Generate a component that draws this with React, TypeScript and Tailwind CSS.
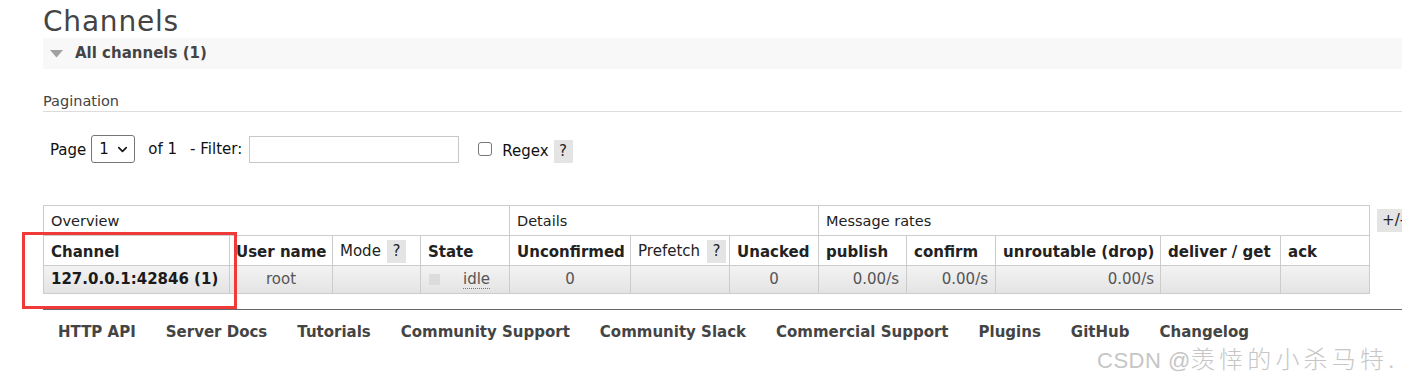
import { ChevronDown } from "lucide-react";

const colWidths = [186, 103, 88, 89, 121, 99, 89, 88, 89, 165, 120, 89];

const footerLinks = [
  "HTTP API",
  "Server Docs",
  "Tutorials",
  "Community Support",
  "Community Slack",
  "Commercial Support",
  "Plugins",
  "GitHub",
  "Changelog",
];

function HelpBadge({ className = "" }: { className?: string }) {
  return (
    <span
      className={`inline-flex h-[23px] w-[19px] items-center justify-center bg-[#e4e4e4] text-[15px] font-normal text-[#222] ${className}`}
    >
      ?
    </span>
  );
}

export default function App() {
  return (
    <div className="relative h-[381px] w-[1402px] overflow-hidden bg-white font-['DejaVu_Sans',sans-serif] text-[#222]">
      <div className="pl-[43px]">
        {/* Title */}
        <h1 className="h-[38px] pt-[5px] text-[28px] leading-[33px] tracking-[0.8px] text-[#444]">
          Channels
        </h1>

        {/* Section toggle */}
        <div className="flex h-[31px] items-center bg-[#f8f8f8] pl-[7px]">
          <svg width="13" height="8" viewBox="0 0 13 8" className="mr-[12px]">
            <polygon points="0,0 13,0 6.5,7.5" fill="#a0a0a0" />
          </svg>
          <span className="text-[15px] font-bold text-[#444]">All channels (1)</span>
        </div>

        {/* Pagination */}
        <div className="mt-[22px] border-b border-[#ddd] text-[14.5px] leading-[20px] text-[#444]">
          Pagination
        </div>

        <div className="mt-[23px] flex h-[28px] items-center text-[15px] text-[#111]">
          <span className="ml-[7px] mt-[2px]">Page</span>
          <div className="ml-[5px] flex h-[28px] w-[44px] items-center rounded-[3px] border border-[#767676] pl-[7px]">
            <span>1</span>
            <ChevronDown className="ml-[6px] h-[15px] w-[15px]" strokeWidth={2.5} />
          </div>
          <span className="ml-[13px] mt-[1px]">of 1</span>
          <span className="ml-[13px]">- Filter:</span>
          <div className="ml-[7px] h-[27px] w-[210px] border border-[#c8c8c8]" />
          <div className="ml-[19px] h-[14px] w-[14px] rounded-[3px] border border-[#767676]" />
          <span className="ml-[10px] mt-[5px]">Regex</span>
          <HelpBadge className="ml-[5px] mt-[4px]" />
        </div>

        {/* Table */}
        <div className="mt-[42px] flex items-start">
          <table className="w-[1326px] shrink-0 table-fixed border-collapse text-[15px]">
            <colgroup>
              {colWidths.map((w, i) => (
                <col key={i} style={{ width: w }} />
              ))}
            </colgroup>
            <thead>
              <tr className="h-[30px]">
                <th colSpan={4} className="border border-[#ccc] pl-[7px] pt-[3px] text-left text-[14.5px] font-normal">
                  Overview
                </th>
                <th colSpan={3} className="border border-[#ccc] pl-[7px] pt-[3px] text-left text-[14.5px] font-normal">
                  Details
                </th>
                <th colSpan={5} className="border border-[#ccc] pl-[7px] pt-[3px] text-left text-[14.5px] font-normal">
                  Message rates
                </th>
              </tr>
              <tr className="h-[30px]">
                <th className="border border-[#ccc] pl-[7px] pt-[3px] text-left font-bold">Channel</th>
                <th className="border border-[#ccc] pl-[6px] pt-[3px] text-left font-bold whitespace-nowrap">User name</th>
                <th className="border border-[#ccc] pl-[7px] pt-[1px] text-left font-normal">
                  <span className="flex items-center">
                    Mode
                    <HelpBadge className="ml-[6px]" />
                  </span>
                </th>
                <th className="border border-[#ccc] pl-[7px] pt-[3px] text-left font-bold">State</th>
                <th className="border border-[#ccc] pl-[7px] pt-[3px] text-left font-bold">Unconfirmed</th>
                <th className="border border-[#ccc] pl-[7px] pt-[1px] text-left font-normal">
                  <span className="flex items-center">
                    Prefetch
                    <HelpBadge className="ml-[7px]" />
                  </span>
                </th>
                <th className="border border-[#ccc] pl-[7px] pt-[3px] text-left font-bold">Unacked</th>
                <th className="border border-[#ccc] pl-[7px] pt-[3px] text-left font-bold">publish</th>
                <th className="border border-[#ccc] pl-[7px] pt-[3px] text-left font-bold">confirm</th>
                <th className="border border-[#ccc] pl-[7px] pt-[3px] text-left font-bold whitespace-nowrap">unroutable (drop)</th>
                <th className="border border-[#ccc] pl-[7px] pt-[3px] text-left font-bold whitespace-nowrap">deliver / get</th>
                <th className="border border-[#ccc] pl-[7px] pt-[3px] text-left font-bold">ack</th>
              </tr>
            </thead>
            <tbody>
              <tr className="h-[28px] bg-gradient-to-b from-[#f3f3f3] to-[#e3e3e3] text-[#555]">
                <td className="border border-[#ccc] pl-[7px] font-bold text-[#1a1a1a] whitespace-nowrap">
                  127.0.0.1:42846 (1)
                </td>
                <td className="border border-[#ccc] text-center">root</td>
                <td className="border border-[#ccc]" />
                <td className="border border-[#ccc] pl-[8px]">
                  <span className="flex items-center">
                    <span className="h-[11px] w-[11px] bg-[#dcdcdc]" />
                    <span className="ml-[23px] border-b border-dotted border-[#777] leading-[18px]">idle</span>
                  </span>
                </td>
                <td className="border border-[#ccc] text-center">0</td>
                <td className="border border-[#ccc]" />
                <td className="border border-[#ccc] text-center">0</td>
                <td className="border border-[#ccc] pr-[7px] text-right">0.00/s</td>
                <td className="border border-[#ccc] pr-[7px] text-right">0.00/s</td>
                <td className="border border-[#ccc] pr-[6px] text-right">0.00/s</td>
                <td className="border border-[#ccc]" />
                <td className="border border-[#ccc]" />
              </tr>
            </tbody>
          </table>
          <span className="ml-[7px] mt-[4px] flex h-[23px] shrink-0 items-center bg-[#e4e4e4] px-[5px] text-[15px] text-[#222]">
            +/-
          </span>
        </div>

        {/* Footer */}
        <div className="mt-[15px] border-t border-[#666] pt-[12px]">
          <nav className="flex gap-[30px] pl-[15px] text-[15px] font-bold leading-[20px] text-[#444]">
            {footerLinks.map((link) => (
              <span key={link} className="whitespace-nowrap">
                {link}
              </span>
            ))}
          </nav>
        </div>
      </div>

      {/* Highlight box */}
      <div className="absolute left-[22px] top-[232px] h-[77px] w-[215px] border-[3px] border-[#f03a3a]" />

      {/* Watermark */}
      <div className="absolute left-[1097px] top-[340px] flex items-baseline whitespace-nowrap text-[#c6c6c6]">
        <span className="font-['Liberation_Sans',sans-serif] text-[22px] tracking-[0.5px]">CSDN @</span>
        <span className="font-['Noto_Sans_CJK_SC',sans-serif] text-[24px] font-light tracking-[4.2px]">
          羡悻的小杀马特.
        </span>
      </div>
    </div>
  );
}
